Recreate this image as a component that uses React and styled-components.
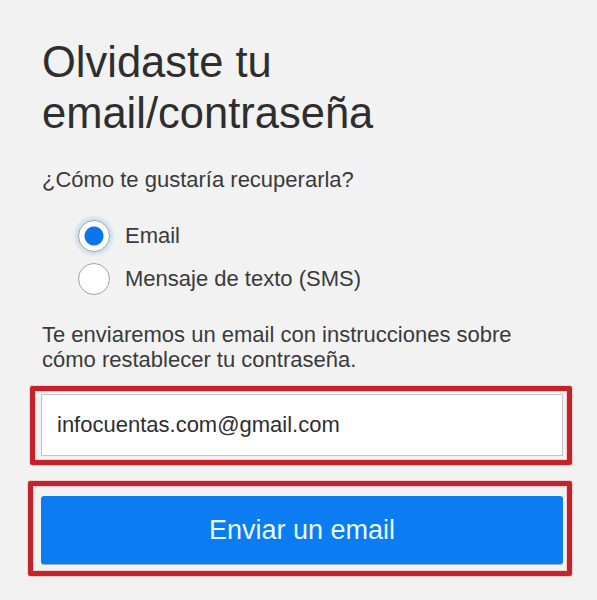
import React from "react";
import styled, { createGlobalStyle } from "styled-components";

const GlobalStyle = createGlobalStyle`
  html, body {
    margin: 0;
    padding: 0;
    background: #f2f2f2;
  }
  body {
    font-family: "Liberation Sans", Arial, sans-serif;
    color: #333;
  }
`;

const Page = styled.main`
  box-sizing: border-box;
  width: 597px;
  min-height: 600px;
  padding: 37px 25px 0 30px;
`;

const Copy = styled.div`
  padding-left: 12px;
`;

const Title = styled.h1`
  margin: 0;
  font-size: 43.5px;
  font-weight: normal;
  line-height: 51px;
  color: #2e2e2e;
`;

const Question = styled.p`
  margin: 28px 0 0;
  font-size: 22px;
  line-height: 26px;
  color: #3a3a3a;
`;

const Options = styled.div`
  margin-top: 21px;
  padding-left: 36px;
`;

const Option = styled.label`
  display: flex;
  align-items: center;
  gap: 15px;
  height: 43px;
  font-size: 22px;
  color: #3a3a3a;
  cursor: pointer;
`;

const Radio = styled.input.attrs({ type: "radio" })`
  appearance: none;
  box-sizing: border-box;
  width: 32px;
  height: 32px;
  margin: 0;
  border: 1px solid #a3a3a3;
  border-radius: 50%;
  background: #fff;
  flex: none;

  &:checked {
    background: radial-gradient(circle, #0a76ea 0 9px, #fff 10px);
    box-shadow: 0 0 3px 3px rgba(140, 185, 235, 0.35);
  }
`;

const Info = styled.p`
  margin: 22px 0 0;
  font-size: 22px;
  line-height: 25px;
  color: #3a3a3a;
`;

const Highlight = styled.div`
  box-sizing: border-box;
  margin: ${p => p.$gap}px 0 0 ${p => p.$shift}px;
  padding: ${p => p.$pad};
  border: 5px solid #c4232b;
  border-radius: 2px;
  box-shadow: 0 0 0 1px rgba(235, 150, 150, 0.35),
    inset 0 0 0 1px rgba(235, 150, 150, 0.35);
`;

const EmailField = styled.input`
  box-sizing: border-box;
  display: block;
  width: 100%;
  height: 62px;
  margin: 0;
  padding: 0 15px;
  border: 1px solid #c4c4c4;
  background: #fff;
  font-family: "Liberation Sans", Arial, sans-serif;
  font-size: 22px;
  color: #2e2e2e;
  outline: none;
`;

const SendButton = styled.button`
  display: block;
  width: 100%;
  height: 68px;
  margin: 0;
  border: 0;
  border-radius: 3px;
  background: #0b7cf2;
  box-shadow: 0 1px 0 rgba(0, 40, 90, 0.35);
  font-family: "Liberation Sans", Arial, sans-serif;
  font-size: 27px;
  color: #e8fbff;
  cursor: pointer;
`;

export default function App() {
  const [method, setMethod] = React.useState("email");

  return (
    <>
      <GlobalStyle />
      <Page>
        <Copy>
          <Title>
            Olvidaste tu
            <br />
            email/contraseña
          </Title>
          <Question>¿Cómo te gustaría recuperarla?</Question>
          <Options>
            <Option>
              <Radio
                name="method"
                checked={method === "email"}
                onChange={() => setMethod("email")}
              />
              Email
            </Option>
            <Option>
              <Radio
                name="method"
                checked={method === "sms"}
                onChange={() => setMethod("sms")}
              />
              Mensaje de texto (SMS)
            </Option>
          </Options>
          <Info>
            Te enviaremos un email con instrucciones sobre
            <br />
            cómo restablecer tu contraseña.
          </Info>
        </Copy>
        <Highlight $gap={14} $shift={0} $pad="3px 4px 4px 6px">
          <EmailField readOnly value="infocuentas.com@gmail.com" />
        </Highlight>
        <Highlight $gap={16} $shift={-2} $pad="10px 4px 7px 8px">
          <SendButton type="button">Enviar un email</SendButton>
        </Highlight>
      </Page>
    </>
  );
}
